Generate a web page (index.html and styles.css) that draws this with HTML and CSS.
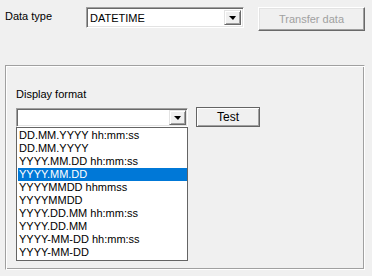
FILE: index.html
```html
<!DOCTYPE html>
<html>
<head>
<meta charset="utf-8">
<link rel="stylesheet" href="styles.css">
</head>
<body>
<div class="top">
  <span class="label lbl-type">Data type</span>
  <div class="combo combo-type">
    <span class="combo-text">DATETIME</span>
    <span class="combo-btn"><span class="arrow"></span></span>
  </div>
  <button class="btn btn-transfer" disabled>Transfer data</button>
</div>
<div class="group">
  <div class="label lbl-format">Display format</div>
  <div class="fmt-row">
    <div class="combo-wrap">
      <div class="combo combo-format">
        <span class="combo-text"></span>
        <span class="combo-btn"><span class="arrow"></span></span>
      </div>
      <ul class="dropdown">
        <li>DD.MM.YYYY hh:mm:ss</li>
        <li>DD.MM.YYYY</li>
        <li>YYYY.MM.DD hh:mm:ss</li>
        <li class="sel">YYYY.MM.DD</li>
        <li>YYYYMMDD hhmmss</li>
        <li>YYYYMMDD</li>
        <li>YYYY.DD.MM hh:mm:ss</li>
        <li>YYYY.DD.MM</li>
        <li>YYYY-MM-DD hh:mm:ss</li>
        <li>YYYY-MM-DD</li>
      </ul>
    </div>
    <button class="btn btn-test">Test</button>
  </div>
</div>
</body>
</html>
```
FILE: styles.css
```css
html, body {
  margin: 0;
  padding: 0;
  background: #f0f0f0;
}
body {
  width: 372px;
  height: 276px;
  font-family: "Liberation Sans", Arial, sans-serif;
  font-size: 11px;
  color: #000;
  overflow: hidden;
}
.top {
  display: flex;
  align-items: flex-start;
  padding: 7px 0 0 5px;
  height: 58px;
}
.lbl-type {
  width: 81px;
  margin-top: 2px;
  line-height: 14px;
}
.combo {
  box-sizing: border-box;
  display: flex;
  align-items: stretch;
  background: #fff;
  border-top: 1px solid #a0a0a0;
  border-left: 1px solid #a0a0a0;
  border-right: 1px solid #fff;
  border-bottom: 1px solid #fff;
  box-shadow: inset 1px 1px 0 #696969, inset -1px -1px 0 #e3e3e3;
}
.combo-type {
  width: 158px;
  height: 21px;
}
.combo-text {
  flex: 1;
  padding: 0 0 0 3px;
  line-height: 18px;
  margin-top: 1px;
}
.combo-btn {
  box-sizing: border-box;
  width: 17px;
  margin: 2px 2px 2px 0;
  background: #f0f0f0;
  border-top: 1px solid #e3e3e3;
  border-left: 1px solid #e3e3e3;
  border-right: 1px solid #696969;
  border-bottom: 1px solid #696969;
  box-shadow: inset 1px 1px 0 #fff, inset -1px -1px 0 #a0a0a0;
  display: flex;
  align-items: center;
  justify-content: center;
}
.arrow {
  width: 0;
  height: 0;
  border-left: 4px solid transparent;
  border-right: 3px solid transparent;
  border-top: 4px solid #000;
  margin-top: 1px;
}
.btn {
  box-sizing: border-box;
  font-family: inherit;
  font-size: 11px;
  padding: 0;
  background: #f0f0f0;
  border-top: 1px solid #fff;
  border-left: 1px solid #fff;
  border-right: 1px solid #696969;
  border-bottom: 1px solid #696969;
  box-shadow: inset -1px -1px 0 #a0a0a0, inset 1px 1px 0 #e3e3e3;
}
.btn-transfer {
  margin-left: 14px;
  width: 107px;
  height: 24px;
  color: #a0a0a0;
}
.group {
  box-sizing: border-box;
  margin-left: 5px;
  width: 360px;
  height: 205px;
  border-top: 1px solid #a0a0a0;
  border-left: 1px solid #a0a0a0;
  border-right: 1px solid #fff;
  border-bottom: 1px solid #fff;
  box-shadow: inset 1px 1px 0 #fff, inset -1px -1px 0 #a0a0a0;
  padding: 21px 0 0 10px;
}
.lbl-format {
  line-height: 14px;
}
.fmt-row {
  display: flex;
  align-items: flex-start;
  margin-top: 7px;
}
.combo-wrap {
  position: relative;
  width: 172px;
}
.combo-format {
  width: 172px;
  height: 19px;
}
.combo-format .combo-btn {
  margin: 1px 1px 1px 0;
}
.dropdown {
  position: absolute;
  left: 0;
  top: 19px;
  box-sizing: border-box;
  width: 172px;
  margin: 0;
  padding: 1px 0 1px 1px;
  list-style: none;
  background: #fff;
  border: 1px solid #646464;
}
.dropdown li {
  height: 13px;
  line-height: 13px;
  padding-left: 1px;
  white-space: nowrap;
}
.dropdown li.sel {
  background: #0078d7;
  color: #fff;
}
.btn-test {
  margin-left: 8px;
  margin-top: -1px;
  width: 64px;
  height: 20px;
  border: 1px solid #646464;
  box-shadow: inset 1px 1px 0 #fff, inset -1px -1px 0 #a0a0a0;
  font-size: 12px;
}
```
